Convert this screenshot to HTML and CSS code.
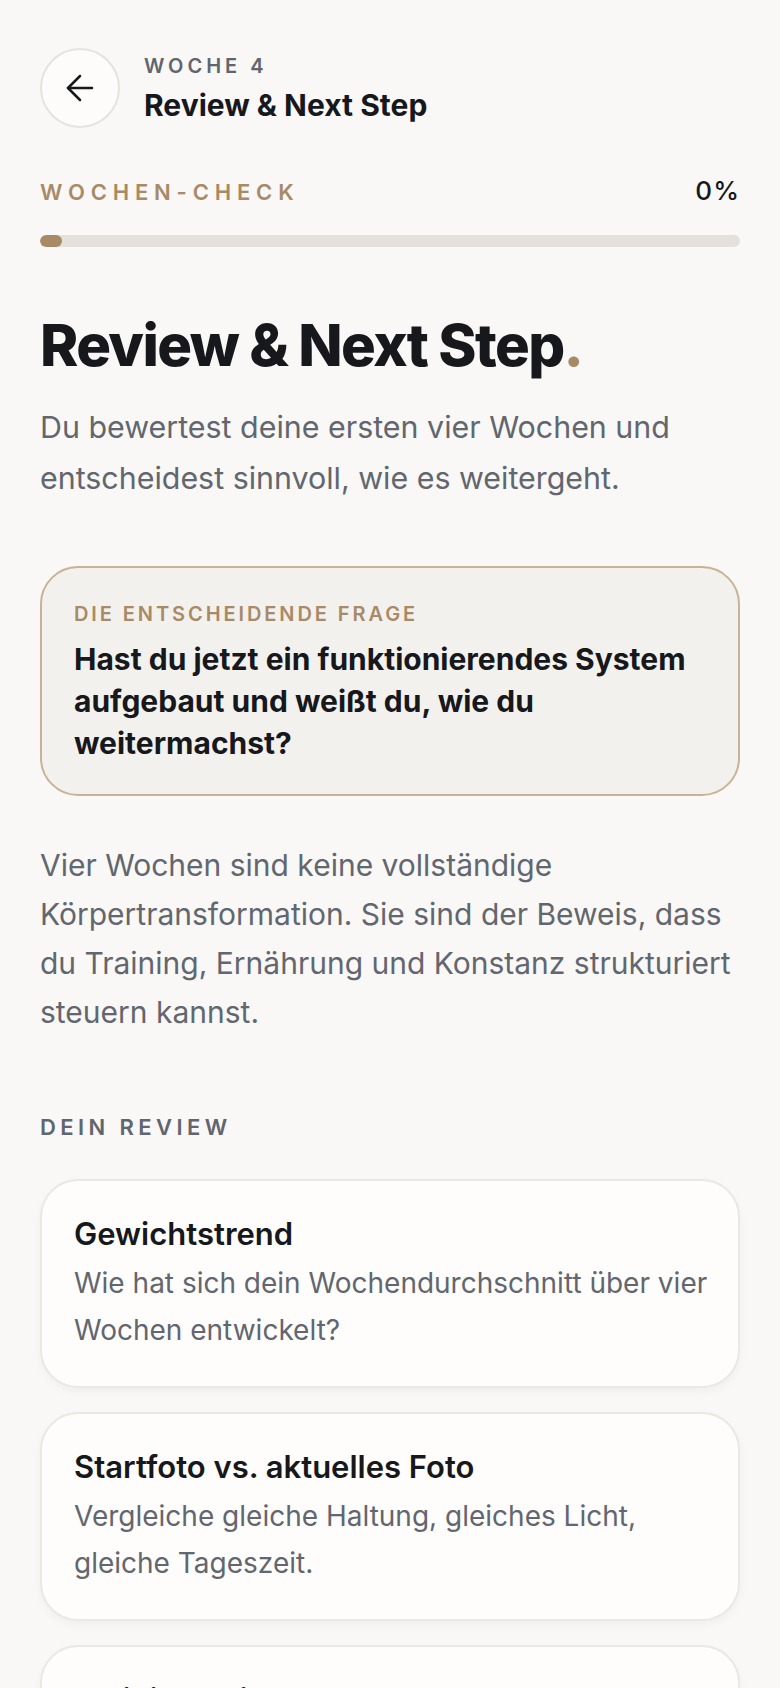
FILE: index.html
```html
<!DOCTYPE html>
<html lang="de">
<head>
<meta charset="utf-8">
<title>Woche 4 – Review &amp; Next Step</title>
<link rel="stylesheet" href="styles.css">
</head>
<body>
<main class="page">
  <header class="topbar">
    <button class="back" aria-label="Zurück">
      <svg viewBox="0 0 24 24" width="36" height="36" fill="none" stroke="#17181c" stroke-width="1.7" stroke-linecap="round" stroke-linejoin="round"><path d="M20 12H4"/><path d="M12 4l-8 8 8 8"/></svg>
    </button>
    <div class="topbar-text">
      <div class="eyebrow">WOCHE 4</div>
      <div class="topbar-title">Review &amp; Next Step</div>
    </div>
  </header>

  <section class="progress">
    <div class="progress-row">
      <span class="progress-label">WOCHEN-CHECK</span>
      <span class="progress-value">0%</span>
    </div>
    <div class="track"><div class="fill"></div></div>
  </section>

  <h1 class="headline">Review &amp; Next Step<span class="dot">.</span></h1>
  <p class="lead">Du bewertest deine ersten vier Wochen und entscheidest sinnvoll, wie es weitergeht.</p>

  <div class="callout">
    <div class="callout-label">DIE ENTSCHEIDENDE FRAGE</div>
    <div class="callout-text">Hast du jetzt ein funktionierendes System aufgebaut und weißt du, wie du weitermachst?</div>
  </div>

  <p class="body">Vier Wochen sind keine vollständige Körpertransformation. Sie sind der Beweis, dass du Training, Ernährung und Konstanz strukturiert steuern kannst.</p>

  <h2 class="section-label">DEIN REVIEW</h2>

  <div class="cards">
    <article class="card">
      <h3 class="card-title">Gewichtstrend</h3>
      <p class="card-text">Wie hat sich dein Wochendurchschnitt über vier Wochen entwickelt?</p>
    </article>
    <article class="card">
      <h3 class="card-title">Startfoto vs. aktuelles Foto</h3>
      <p class="card-text">Vergleiche gleiche Haltung, gleiches Licht, gleiche Tageszeit.</p>
    </article>
    <article class="card">
      <h3 class="card-title">Trainingsleistung</h3>
      <p class="card-text">Welche Übungen haben sich verbessert?</p>
    </article>
  </div>
</main>
</body>
</html>
```

FILE: styles.css
```css
* { box-sizing: border-box; }
html, body { margin: 0; padding: 0; }
body {
  background: #f9f8f6;
  font-family: Inter, "Noto Sans", "Liberation Sans", sans-serif;
  color: #17181c;
  overflow: hidden;
}
.page {
  padding: 48px 40px 0 40px;
}
.topbar {
  display: flex;
  align-items: center;
  gap: 24px;
}
.back {
  width: 80px;
  height: 80px;
  border-radius: 50%;
  border: 2px solid #e6e3de;
  background: #fdfcfa;
  display: flex;
  align-items: center;
  justify-content: center;
  padding: 0;
  flex: none;
}
.topbar-text {
  display: flex;
  flex-direction: column;
  gap: 9px;
}
.eyebrow {
  font-size: 20px;
  line-height: 24px;
  font-weight: 600;
  letter-spacing: 0.2em;
  color: #61656d;
}
.topbar-title {
  font-size: 30px;
  line-height: 36px;
  font-weight: 700;
  letter-spacing: 0;
}
.progress { margin-top: 50px; }
.progress-row {
  display: flex;
  justify-content: space-between;
  align-items: baseline;
}
.progress-label {
  font-size: 22px;
  line-height: 26px;
  font-weight: 600;
  letter-spacing: 0.265em;
  color: #a88a66;
}
.progress-value {
  font-size: 26px;
  line-height: 26px;
  font-weight: 500;
  letter-spacing: 0.04em;
}
.track {
  margin-top: 30px;
  height: 12px;
  border-radius: 6px;
  background: #e4e1dc;
  overflow: hidden;
}
.fill {
  width: 22px;
  height: 100%;
  border-radius: 6px;
  background: #a88a66;
}
.headline {
  margin: 65px 0 0 0;
  font-size: 58px;
  line-height: 66px;
  font-weight: 800;
  letter-spacing: -0.028em;
}
.dot { color: #a88a66; }
.lead {
  margin: 24px 0 0 0;
  font-size: 30.4px;
  line-height: 51px;
  color: #62666e;
}
.callout {
  margin-top: 62px;
  border: 2px solid #c9b396;
  background: #f3f1ee;
  border-radius: 38px;
  padding: 34px 32px 30px 32px;
}
.callout-label {
  font-size: 20px;
  line-height: 24px;
  font-weight: 600;
  letter-spacing: 0.146em;
  color: #a88a66;
}
.callout-text {
  margin-top: 12px;
  font-size: 30px;
  line-height: 42px;
  font-weight: 700;
  letter-spacing: 0;
}
.body {
  margin: 45px 0 0 0;
  font-size: 30px;
  line-height: 49px;
  color: #62666e;
}
.section-label {
  margin: 77px 0 0 0;
  font-size: 22px;
  line-height: 26px;
  font-weight: 600;
  letter-spacing: 0.2em;
  color: #61656d;
}
.cards {
  margin-top: 39px;
  display: flex;
  flex-direction: column;
  gap: 24px;
}
.card {
  background: #fefdfb;
  border: 2px solid #ebe8e3;
  border-radius: 38px;
  padding: 35px 22px 32px 32px;
  box-shadow: 0 4px 10px rgba(40, 30, 20, 0.04);
}
.card-title {
  margin: 0;
  font-size: 31px;
  line-height: 36px;
  font-weight: 600;
  letter-spacing: 0;
}
.card-text {
  margin: 8px 0 0 0;
  font-size: 28px;
  line-height: 47px;
  color: #62666e;
}
```
